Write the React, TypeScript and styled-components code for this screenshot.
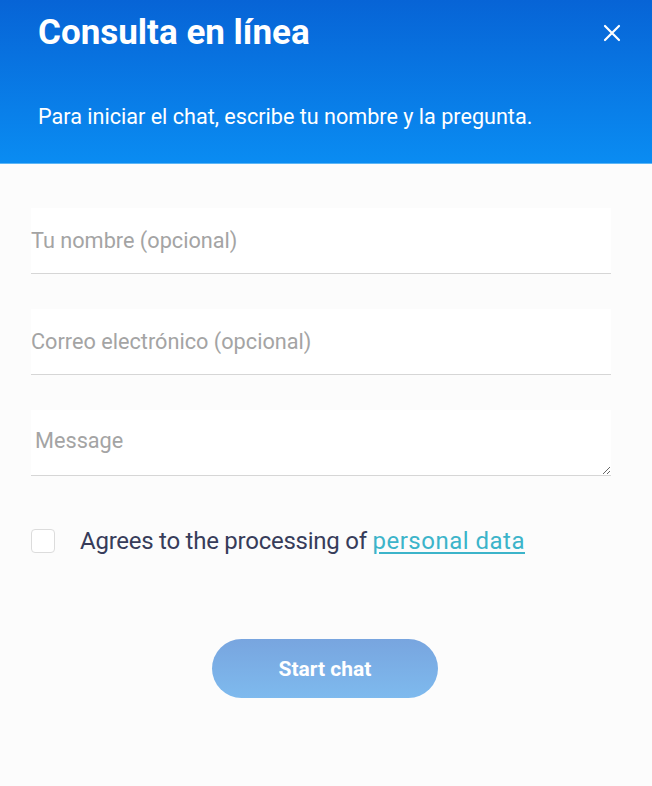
import React from "react";
import styled, { createGlobalStyle } from "styled-components";

const Global = createGlobalStyle`
  html, body { margin: 0; padding: 0; background: #fcfcfc; }
  body { font-family: Roboto, "Noto Sans", sans-serif; }
  * { box-sizing: border-box; }
`;

const Page = styled.div`
  width: 652px;
  min-height: 786px;
  background: #fcfcfc;
  display: flex;
  flex-direction: column;
`;

const Header = styled.header`
  height: 164px;
  background: linear-gradient(180deg, #0764d6 0%, #0a8cf2 100%);
  padding: 12px 28px 0 38px;
  display: flex;
  flex-direction: column;
  color: #fff;
  border-bottom: 1px solid #5cb6f6;
`;

const TitleRow = styled.div`
  display: flex;
  align-items: center;
  justify-content: space-between;
  height: 42px;
`;

const Title = styled.h1`
  margin: 0;
  font-size: 35px;
  font-weight: 700;
  letter-spacing: 0;
  line-height: 42px;
`;

const Close = styled.button`
  background: none;
  border: 0;
  padding: 0;
  width: 24px;
  height: 24px;
  display: flex;
  align-items: center;
  justify-content: center;
  cursor: pointer;
`;

const Subtitle = styled.p`
  margin: 50px 0 0;
  font-size: 21.6px;
  line-height: 26px;
  font-weight: 400;
`;

const Form = styled.form`
  padding: 44px 41px 0 31px;
  display: flex;
  flex-direction: column;
  gap: 35px;
`;

const Field = styled.input`
  width: 100%;
  height: 66px;
  border: 0;
  border-bottom: 1px solid #d6d6d6;
  background: #fff;
  padding: 0;
  font-family: Roboto, sans-serif;
  font-size: 21.7px;
  color: #333;
  outline: none;
  &::placeholder { color: #a4a4a4; }
`;

const Area = styled.textarea`
  width: 100%;
  height: 66px;
  border: 0;
  border-bottom: 1px solid #d6d6d6;
  background: #fff;
  padding: 18px 4px 0;
  font-family: Roboto, sans-serif;
  font-size: 21.7px;
  color: #333;
  outline: none;
  resize: vertical;
  display: block;
  &::placeholder { color: #a4a4a4; }
`;

const AgreeRow = styled.label`
  display: flex;
  align-items: center;
  gap: 25px;
  margin-top: 16px;
  font-size: 24px;
  line-height: 28px;
  letter-spacing: -0.25px;
  color: #373c5a;
`;

const Box = styled.span`
  width: 24px;
  height: 24px;
  border: 1px solid #dcdcdc;
  border-radius: 4px;
  background: #fff;
  flex: none;
`;

const Link = styled.a`
  color: #3cb4ca;
  letter-spacing: 0.5px;
  text-decoration: underline;
  text-underline-offset: 3px;
`;

const ButtonWrap = styled.div`
  display: flex;
  justify-content: center;
  margin-top: 49px;
  padding-left: 8px;
`;

const Start = styled.button`
  width: 226px;
  height: 59px;
  border: 0;
  border-radius: 30px;
  background: linear-gradient(180deg, #78a5df 0%, #7ebaee 100%);
  color: #fff;
  font-family: Roboto, sans-serif;
  font-size: 21px;
  font-weight: 700;
  cursor: pointer;
`;

export default function App() {
  return (
    <Page>
      <Global />
      <Header>
        <TitleRow>
          <Title>Consulta en línea</Title>
          <Close aria-label="Cerrar">
            <svg width="18" height="18" viewBox="0 0 18 18">
              <path d="M2 2 L16 16 M16 2 L2 16" stroke="#fff" strokeWidth="2.2" strokeLinecap="round" />
            </svg>
          </Close>
        </TitleRow>
        <Subtitle>Para iniciar el chat, escribe tu nombre y la pregunta.</Subtitle>
      </Header>
      <Form onSubmit={(e) => e.preventDefault()}>
        <Field placeholder="Tu nombre (opcional)" />
        <Field placeholder="Correo electrónico (opcional)" />
        <Area placeholder="Message" />
        <AgreeRow>
          <Box />
          <span>
            Agrees to the processing of <Link href="#">personal data</Link>
          </span>
        </AgreeRow>
        <ButtonWrap>
          <Start type="submit">Start chat</Start>
        </ButtonWrap>
      </Form>
    </Page>
  );
}
